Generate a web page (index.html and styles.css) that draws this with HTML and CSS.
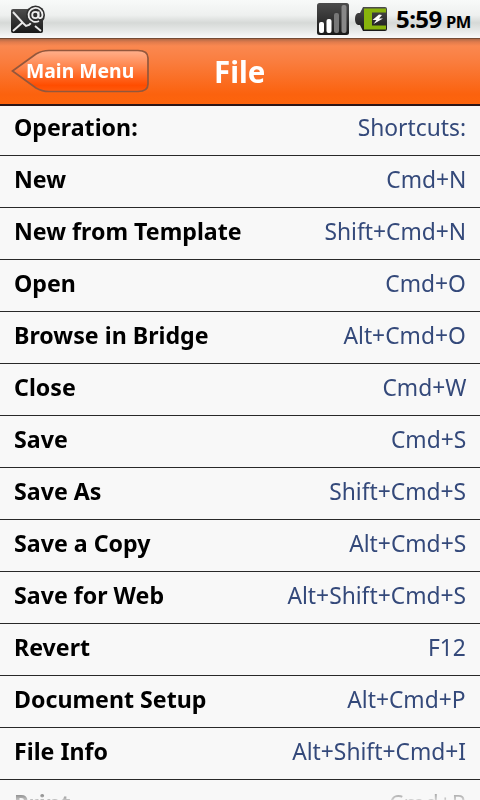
FILE: index.html
```html
<!DOCTYPE html>
<html lang="en">
<head>
<meta charset="utf-8">
<title>File</title>
<link rel="stylesheet" href="styles.css">
</head>
<body>
<div class="status">
  <svg class="mail" width="36" height="30" viewBox="0 0 36 30">
    <defs><linearGradient id="dark" x1="0" y1="0" x2="0" y2="1"><stop offset="0" stop-color="#4c4c4c"/><stop offset="1" stop-color="#191919"/></linearGradient></defs>
    <rect x="1" y="4" width="32" height="24" rx="2" fill="url(#dark)"/>
    <path d="M3 7 13 18 16 21 19 20 21 18M3 26 12 18M25 21 31 26" fill="none" stroke="#e8e8e8" stroke-width="1.9"/>
    <circle cx="25.500" cy="10" r="9.500" fill="#303030"/>
    <path d="M28.600 6.500v5.500c0 2 3.900 1.500 3.900-2a7 7 0 1 0-3.500 6" fill="none" stroke="#eee" stroke-width="1.800"/>
    <circle cx="25.300" cy="10" r="3.100" fill="none" stroke="#eee" stroke-width="1.800"/>
  </svg>
  <svg class="signal" width="32" height="32" viewBox="0 0 32 32">
    <rect width="32" height="32" rx="2.500" fill="url(#dark)"/>
    <rect x="2" y="19" width="5" height="11" rx="2" fill="#fff"/>
    <rect x="9.500" y="16" width="5" height="14" rx="2" fill="#fff"/>
    <rect x="17" y="10" width="5" height="20" rx="2" fill="#777"/>
    <rect x="24.500" y="2" width="5" height="28" rx="2" fill="#888"/>
  </svg>
  <svg class="battery" width="33" height="24" viewBox="0 0 33 24">
    <path d="M8 0H30Q32 0 32 2V22Q32 24 30 24H8L5 18H3Q0 17 0 12T3 6H5Z" fill="url(#dark)"/>
    <path d="M9 1.500H31V5.500H17V18.500H31V22.500H9Z" fill="#88b40c"/>
    <path d="M24 7.500 17.500 13H21.500L18.500 17 28 11.500H24L27 8Z" fill="#fff"/>
  </svg>
  <span class="time">5:59</span><span class="ampm">PM</span>
</div>
<header class="header">
  <div class="back">
    <svg class="back-shape" width="138" height="44" viewBox="0 0 138 44">
      <defs><linearGradient id="btn" x1="0" y1="0" x2="0" y2="1"><stop offset="0" stop-color="#ffb08c"/><stop offset=".45" stop-color="#ff7f43"/><stop offset=".85" stop-color="#ff4d00"/><stop offset="1" stop-color="#ff5a0c"/></linearGradient></defs>
      <path d="M1.500 22 25 5Q31 1.500 38 1.500H127Q137 1.500 137 9V35Q137 42.500 127 42.500H38Q31 42.500 25 39Z" fill="url(#btn)" stroke="#93573c" stroke-width="1.700"/>
    </svg>
    <span class="back-label">Main Menu</span>
  </div>
  <h1 class="title">File</h1>
</header>
<main class="list">
  <div class="row"><b>Operation:</b><span>Shortcuts:</span></div>
  <div class="row"><b>New</b><span>Cmd+N</span></div>
  <div class="row"><b>New from Template</b><span>Shift+Cmd+N</span></div>
  <div class="row"><b>Open</b><span>Cmd+O</span></div>
  <div class="row"><b>Browse in Bridge</b><span>Alt+Cmd+O</span></div>
  <div class="row"><b>Close</b><span>Cmd+W</span></div>
  <div class="row"><b>Save</b><span>Cmd+S</span></div>
  <div class="row"><b>Save As</b><span>Shift+Cmd+S</span></div>
  <div class="row"><b>Save a Copy</b><span>Alt+Cmd+S</span></div>
  <div class="row"><b>Save for Web</b><span>Alt+Shift+Cmd+S</span></div>
  <div class="row"><b>Revert</b><span>F12</span></div>
  <div class="row"><b>Document Setup</b><span>Alt+Cmd+P</span></div>
  <div class="row"><b>File Info</b><span>Alt+Shift+Cmd+I</span></div>
  <div class="row faded"><b>Print</b><span>Cmd+P</span></div>
</main>
</body>
</html>
```
FILE: styles.css
```css
* { box-sizing: border-box; }
body {
  margin: 0;
  width: 480px;
  height: 800px;
  overflow: hidden;
  display: flex;
  flex-direction: column;
  background: #f8f8f8;
  font-family: "Noto Sans", "Open Sans", sans-serif;
}
.status {
  flex: none;
  height: 38px;
  display: flex;
  align-items: center;
  padding: 0 9px 0 10px;
  background: linear-gradient(#f8faf9 0, #eef0ef 40%, #d6d9d7 60%, #e6e8e7 80%, #fafafa 100%);
  color: #000;
  font-weight: 700;
}
.mail { margin-top: 2px; }
.signal { margin-left: auto; }
.battery { margin-left: 6px; }
.time {
  margin: -1px 0 0 8px;
  width: 46px;
  font-size: 24px;
  letter-spacing: -.6px;
  white-space: nowrap;
}
.ampm {
  margin-left: 4px;
  width: 25px;
  font-size: 16.500px;
  padding-top: 4px;
  letter-spacing: -.5px;
}
.header {
  flex: none;
  height: 68px;
  display: flex;
  align-items: flex-start;
  padding: 11px 0 0 11px;
  border-top: 1px solid #754b35;
  border-bottom: 2px solid #2c1618;
  background: linear-gradient(#b06a48 0, #e07b4c 3px, #fa8850 7px, #fa7d3e 35%, #fb620e 85%, #fd640c 100%);
  color: #fff;
  position: relative;
}
.back {
  display: grid;
  flex: none;
  width: 138px;
  height: 44px;
  margin-top: -1px;
}
.back-shape, .back-label { grid-area: 1 / 1; }
.back-label {
  padding-left: 15px;
  font-size: 20px;
  line-height: 43px;
  font-weight: 700;
  white-space: nowrap;
  transform: scaleX(.968);
  transform-origin: 15px 0;
}
.title {
  margin: 0 0 0 65px;
  font-size: 31px;
  line-height: 43px;
  font-weight: 700;
  transform: scaleX(.95);
  transform-origin: left;
}
.list { margin-top: -2px; }
.row {
  display: flex;
  justify-content: space-between;
  height: 52px;
  padding: 0 14px;
  border-bottom: 1px solid #292929;
  font-size: 24px;
  line-height: 46px;
  white-space: nowrap;
  color: #000;
}
.row b {
  transform: scaleX(.966);
  transform-origin: left;
}
.row span {
  color: #34497a;
  transform: scaleX(.95);
  transform-origin: right;
}
.faded b, .faded span {
  color: transparent;
  background-clip: text;
}
.faded b { background-image: linear-gradient(#888 14px, #d8d8d8 22px); }
.faded span { background-image: linear-gradient(#aaa 14px, #ddd 22px); }
```
